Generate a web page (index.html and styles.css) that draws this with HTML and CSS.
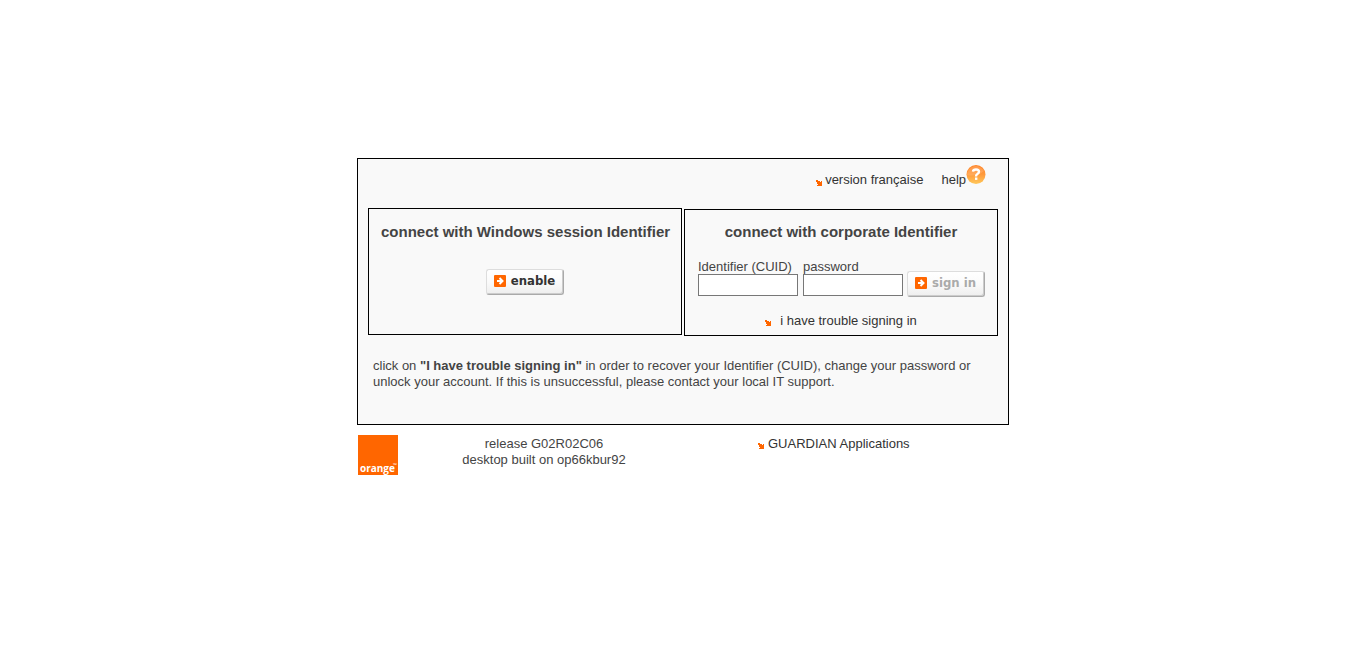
FILE: index.html
```html
<!DOCTYPE html>
<html lang="en">
<head>
<meta charset="utf-8">
<title>Sign in</title>
<link rel="stylesheet" href="styles.css">
</head>
<body>
<svg class="sprite" aria-hidden="true">
  <symbol id="arrow" viewBox="0 0 6 6"><path fill="#f60" d="M0 0H2V1H4V2H5V1H6V6H1V5H2V4H1V2H0Z"/></symbol>
  <symbol id="go" viewBox="0 0 12 12"><rect width="12" height="12" rx="1" fill="#f60"/><path d="M3 6H8M5.500 3L8.500 6L5.500 9" fill="none" stroke="#fff" stroke-width="2"/></symbol>
</svg>
<div class="page">
  <main class="panel">
    <nav class="top">
      <a class="link" href="#"><svg class="arrow"><use href="#arrow"/></svg>version française</a>
      <a class="help" href="#">help<svg class="question" viewBox="0 0 20 20" aria-hidden="true">
        <defs><linearGradient id="glow" x1="0" y1="0" x2="0" y2="1"><stop offset="0" stop-color="#ff8427"/><stop offset=".5" stop-color="#ff9a3c"/><stop offset="1" stop-color="#ffc85a"/></linearGradient></defs>
        <circle cx="10" cy="9.5" r="9.5" fill="url(#glow)"/>
        <path d="M1 10A9 9 0 0 1 18 6Q11 12 1 10" fill="#fff" opacity=".15"/>
        <path d="M7 6.7Q7.200 4.5 10 4.5Q13 4.5 13 6.800Q13 8.100 11.400 9Q10 9.800 10 11.5" fill="none" stroke="#fff" stroke-width="2.4"/><rect x="9" y="12.500" width="2.4" height="2.4" fill="#fff"/>
      </svg></a>
    </nav>
    <div class="methods">
      <section class="box">
        <h2>connect with Windows session Identifier</h2>
        <form class="session"><button class="btn" type="button"><svg class="go"><use href="#go"/></svg>enable</button></form>
      </section>
      <section class="box corporate">
        <h2>connect with corporate Identifier</h2>
        <form class="login">
          <div class="field"><label for="cuid">Identifier (CUID)</label><input id="cuid" type="text"></div>
          <div class="field"><label for="password">password</label><input id="password" type="password"></div>
          <button class="btn" type="button" disabled><svg class="go"><use href="#go"/></svg>sign in</button>
        </form>
        <a class="link trouble" href="#"><svg class="arrow"><use href="#arrow"/></svg>i have trouble signing in</a>
      </section>
    </div>
    <p class="info">click on <b>"I have trouble signing in"</b> in order to recover your Identifier (CUID), change your password or unlock your account. If this is unsuccessful, please contact your local IT support.</p>
  </main>
  <footer class="footer">
    <svg class="logo" viewBox="0 0 40 40" role="img" aria-label="orange"><rect width="40" height="40" fill="#f60"/><text x="2" y="37" class="brand">orange</text><text x="35" y="32" class="tm">™</text></svg>
    <p class="release">release G02R02C06<br>desktop built on op66kbur92</p>
    <div class="apps"><a class="link" href="#"><svg class="arrow"><use href="#arrow"/></svg>GUARDIAN Applications</a></div>
  </footer>
</div>
</body>
</html>
```
FILE: styles.css
```css
* { box-sizing: border-box; }
body { margin: 0; background: #fff; color: #444; font: 13px/16px "Liberation Sans", Arial, sans-serif; }
.sprite { position: absolute; width: 0; height: 0; }
.page { max-width: 652px; margin: 158px auto 0; }
.panel { border: 1px solid #000; background: #f9f9f9; padding: 4px 10px 34px; }
a { color: #333; text-decoration: none; }
.top { display: flex; justify-content: flex-end; gap: 18px; padding: 9px 12px 0 0; height: 45px; }
.link { display: inline-flex; align-items: flex-start; gap: 4px; }
.top .link { gap: 3px; }
.arrow { width: 6px; height: 6px; margin-top: 7px; flex: none; }
.top .arrow { margin-top: 8px; }
.help { display: flex; align-items: flex-start; }
.question { width: 20px; height: 20px; margin-top: -7px; }
.methods { display: grid; grid-template-columns: repeat(2, minmax(0, 1fr)); gap: 2px; align-items: start; }
.box { border: 1px solid #000; height: 127px; padding: 14px 12px 0; }
.corporate { margin-top: 1px; padding: 13px 13px 0; }
h2 { margin: 0; font-size: 15px; line-height: 18px; text-align: center; white-space: nowrap; }
.session { display: flex; justify-content: center; padding-top: 28px; }
.btn { display: inline-flex; align-items: center; gap: 5px; height: 26px; padding: 0 8px 2px 7px; border: 1px solid; border-color: #ddd #aaa #aaa #ddd; border-radius: 3px; background: linear-gradient(#fff, #fafafa 50%, #eee); box-shadow: inset -1px -1px #ccc; color: #333; font: bold 13px/16px "DejaVu Sans Condensed", "DejaVu Sans", sans-serif; white-space: nowrap; }
.btn:disabled { color: #aaa; }
.go { width: 12px; height: 12px; flex: none; }
.login { display: flex; align-items: flex-end; gap: 5px; padding-top: 18px; }
.login .btn { margin: 0 0 -1px -1px; }
.field { display: flex; flex-direction: column; flex: none; width: 100px; }
.field label { line-height: 15px; }
.field input { width: 100%; height: 22px; border: 1px solid #777; background: #fff; padding: 1px; font: inherit; }
.trouble { display: flex; justify-content: center; gap: 9px; padding-top: 17px; }
.info { margin: 22px 5px 0; }
.footer { display: grid; grid-template-columns: 40px 292px 1fr; padding: 10px 1px 0; }
.logo { width: 40px; height: 40px; }
.brand { font: bold 10px "Open Sans", sans-serif; fill: #fff; }
.tm { font: 5px "Open Sans", sans-serif; fill: #fff; }
.release { margin: 1px 0 0; text-align: center; }
.apps { padding: 1px 0 0 68px; }
```
